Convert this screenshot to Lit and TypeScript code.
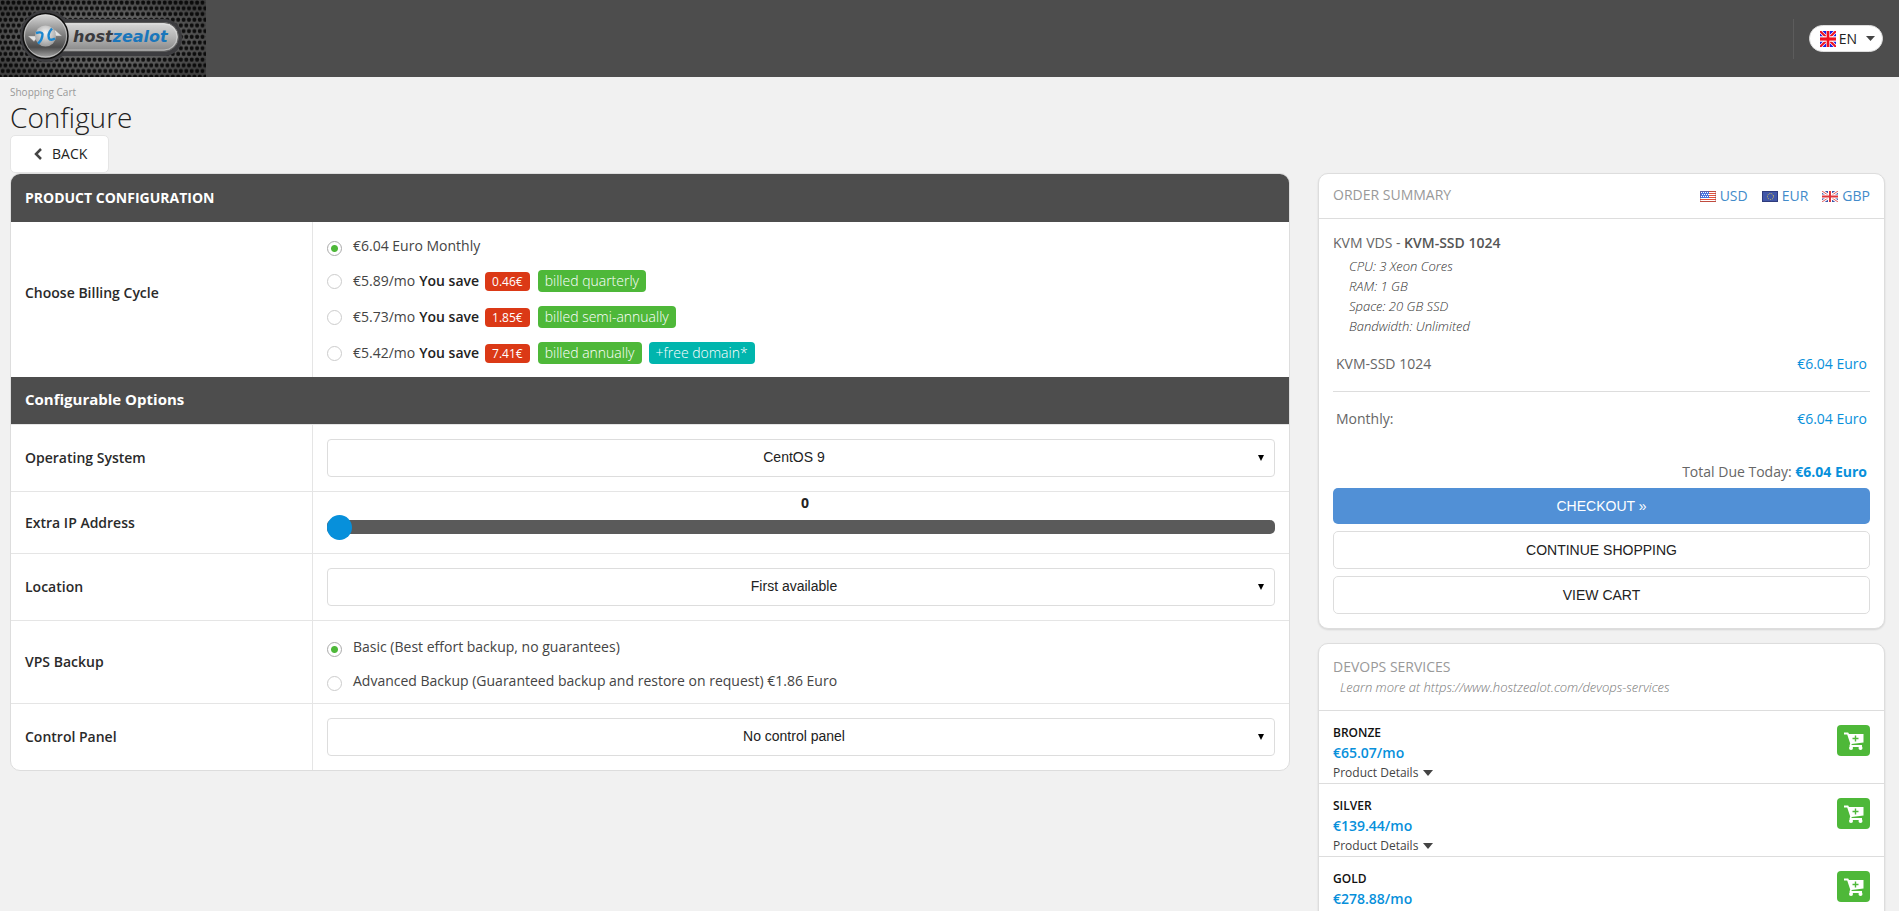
import { LitElement, html, css, svg } from "lit";
import { customElement, state } from "lit/decorators.js";

const unionJack = svg`
  <rect width="60" height="40" fill="#1c1ce0"/>
  <path d="M0 0L60 40M60 0L0 40" stroke="#fff" stroke-width="10"/>
  <path d="M0 0L60 40M60 0L0 40" stroke="#f01020" stroke-width="6"/>
  <path d="M30 0V40M0 20H60" stroke="#fff" stroke-width="14"/>
  <path d="M30 0V40" stroke="#f01020" stroke-width="10"/>
  <path d="M0 20H60" stroke="#f01020" stroke-width="8"/>`;

const flagUS = html`<svg class="flag" viewBox="0 0 16 11" aria-hidden="true">
  <rect width="16" height="11" fill="#fff"/>
  <path d="M0 .5H16M0 2.5H16M0 4.5H16M0 6.5H16M0 8.5H16M0 10.5H16" stroke="#e0543f"/>
  <rect width="9" height="7" fill="#4a74e0"/>
  <path d="M1 1.5H9M2 3.5H9M1 5.5H9" stroke="#fff" stroke-dasharray="1 1"/>
  <rect x=".5" y=".5" width="15" height="10" fill="none" stroke="#843c3c" stroke-opacity=".35"/></svg>`;

const flagEU = html`<svg class="flag" viewBox="0 0 16 11" aria-hidden="true">
  <rect width="16" height="11" fill="#4257a8"/>
  <circle cx="8.5" cy="5.5" r="3" fill="none" stroke="#e8d44a" stroke-dasharray="1 1.1"/>
  <rect x=".5" y=".5" width="15" height="10" fill="none" stroke="#2a3570" stroke-opacity=".8"/></svg>`;

const flagGB = html`<svg class="flag" viewBox="0 0 16 11" aria-hidden="true">
  <rect width="16" height="11" fill="#3f55a8"/>
  <path d="M0 0L16 11M16 0L0 11" stroke="#fff" stroke-width="3"/>
  <path d="M0 0L16 11M16 0L0 11" stroke="#e35a5a" stroke-width="1"/>
  <path d="M8 0V11M0 5.5H16" stroke="#fff" stroke-width="4"/>
  <path d="M8 0V11M0 5.5H16" stroke="#e0353c" stroke-width="2"/></svg>`;

const logo = html`<svg class="logo" viewBox="0 0 206 77" role="img" aria-label="hostzealot">
  <defs>
    <pattern id="mesh" width="5.4" height="11.4" patternUnits="userSpaceOnUse">
      <rect width="5.4" height="11.4" fill="#626262"/>
      <ellipse cx="2.7" cy="2.6" rx="2" ry="2.2" fill="#101010"/>
      <ellipse cx="0" cy="8.3" rx="2" ry="2.2" fill="#101010"/>
      <ellipse cx="5.4" cy="8.3" rx="2" ry="2.2" fill="#101010"/>
    </pattern>
    <radialGradient id="shade" cx=".5" cy=".5" r=".6">
      <stop offset=".5" stop-color="#000" stop-opacity="0"/>
      <stop offset="1" stop-color="#000" stop-opacity=".35"/>
    </radialGradient>
    <linearGradient id="bar" x1="0" y1="0" x2="0" y2="1">
      <stop offset="0" stop-color="#d8d8d8"/><stop offset=".5" stop-color="#b4b4b4"/><stop offset="1" stop-color="#868686"/>
    </linearGradient>
    <linearGradient id="knob" x1="0" y1="0" x2="0" y2="1">
      <stop offset="0" stop-color="#dcdcdc"/><stop offset=".4" stop-color="#8c8c8c"/><stop offset=".75" stop-color="#4c4c4c"/><stop offset="1" stop-color="#b0b0b0"/>
    </linearGradient>
    <radialGradient id="orb" cx=".5" cy=".35" r=".6">
      <stop offset="0" stop-color="#f4f4f4"/><stop offset="1" stop-color="#a2a2a2"/>
    </radialGradient>
  </defs>
  <rect width="206" height="77" fill="url(#mesh)"/>
  <rect width="206" height="77" fill="url(#shade)"/>
  <rect x="40" y="19" width="142" height="37" rx="18" fill="#3d3d40"/>
  <circle cx="46" cy="36" r="26" fill="#3d3d40"/>
  <rect x="44" y="22.5" width="134.5" height="29" rx="14.5" fill="url(#bar)" stroke="#5a5a5a"/>
  <rect x="46" y="24" width="131" height="26" rx="13" fill="none" stroke="#ececec" stroke-opacity=".5"/>
  <circle cx="45.5" cy="36" r="22.5" fill="url(#knob)" stroke="#101010" stroke-width="1.5"/>
  <circle cx="45.5" cy="36" r="21" fill="none" stroke="#e8e8e8" stroke-opacity=".55"/>
  <path d="M44 36L28 36L34 41.5L37 38L38 42ZM46 36L62 36L54 29L55 34L50 31Z" fill="#e4e4e4" stroke="#888" stroke-width=".5"/>
  <circle cx="45.5" cy="36" r="10.5" fill="url(#orb)"/>
  <path d="M36 33C39 32 42 32 42.5 34C42.500 37.500 41 41 38 43.500" fill="none" stroke="#1b86cf" stroke-width="2.4"/>
  <path d="M52 28.5C49 32 48 36 49 38.5C50 40.500 52.500 40 55 38.500" fill="none" stroke="#1b86cf" stroke-width="2.4"/>
  <text x="73" y="42" class="logo-text"><tspan fill="#3a3a3e">host</tspan><tspan fill="#1a76bb">zealot</tspan></text>
</svg>`;

const cartIcon = html`<svg width="21" height="21" viewBox="0 0 21 21" aria-hidden="true">
  <path fill="#fff" d="M1 2.5H5.2L6 4H20.5V12.5L8.5 14L8.7 15H19V17H7L6.5 15.5L7.2 13.5L4.2 4.5H1Z"/>
  <circle cx="8" cy="18" r="2" fill="#fff"/><circle cx="17.5" cy="18" r="2" fill="#fff"/>
  <path d="M12.5 5.5V11.5M9.5 8.5H15.5" stroke="#4eb839" stroke-width="1.4"/>
</svg>`;

interface Cycle { price: string; save?: string; term?: string; bonus?: string }

const cycles: Cycle[] = [
  { price: "€6.04 Euro Monthly" },
  { price: "€5.89/mo", save: "0.46€", term: "billed quarterly" },
  { price: "€5.73/mo", save: "1.85€", term: "billed semi-annually" },
  { price: "€5.42/mo", save: "7.41€", term: "billed annually", bonus: "+free domain*" },
];
const backups = [
  "Basic (Best effort backup, no guarantees)",
  "Advanced Backup (Guaranteed backup and restore on request) €1.86 Euro",
];
const specs = ["CPU: 3 Xeon Cores", "RAM: 1 GB", "Space: 20 GB SSD", "Bandwidth: Unlimited"];
const services = [
  { name: "BRONZE", price: "€65.07/mo" },
  { name: "SILVER", price: "€139.44/mo" },
  { name: "GOLD", price: "€278.88/mo" },
];

@customElement("app-root")
export class AppRoot extends LitElement {
  @state() private cycle = 0;
  @state() private backup = 0;
  @state() private extraIps = 0;

  static styles = css`
    :host {
      display: block;
      min-height: 100vh;
      background: #f1f1f1;
      color: #444;
      font: 400 14px/20px "Open Sans", sans-serif;
    }
    * { box-sizing: border-box; }
    h1, h2, h3, p, ul { margin: 0; padding: 0; list-style: none; font-size: inherit; font-weight: inherit; }
    a { color: inherit; text-decoration: none; }
    button, select, input { font: inherit; color: inherit; margin: 0; }
    button { cursor: pointer; }
    b { font-weight: 600; }

    .topbar {
      display: flex;
      align-items: center;
      justify-content: space-between;
      height: 77px;
      padding-right: 16px;
      background: #4d4d4d;
    }
    .logo { display: block; width: 206px; height: 77px; }
    .logo-text { font: italic bold 16px "DejaVu Sans", sans-serif; }
    .lang-area {
      display: flex;
      align-items: center;
      height: 40px;
      padding-left: 15px;
      border-left: 1px solid #5c5c5c;
    }
    .lang {
      display: flex;
      align-items: center;
      height: 27px;
      padding: 0 7px 0 10px;
      border: 1px solid #ddd;
      border-radius: 14px;
      background: #fff;
      color: #222;
    }
    .lang svg:first-child { margin-right: 3px; }
    .lang svg:last-child { margin-left: 9px; }

    .heading { padding: 5px 10px 0; }
    .crumb { font-size: 10px; color: #999; }
    .title { margin-bottom: 3px; color: #222; font-size: 28px; font-weight: 300; line-height: 30px; }
    .back {
      display: flex;
      align-items: center;
      gap: 9px;
      height: 38px;
      padding: 0 21px 0 22px;
      border: 1px solid #e5e5e5;
      border-radius: 5px;
      background: #fff;
      color: #222;
    }
    .columns {
      display: grid;
      grid-template-columns: 1280fr 567fr;
      gap: 28px;
      align-items: start;
      padding: 0 14px 14px 10px;
    }
    .side { display: grid; gap: 14px; }

    .panel, .card {
      border: 1px solid #ddd;
      border-radius: 10px;
      background: #fff;
      overflow: hidden;
    }
    .card { box-shadow: 0 1px 2px rgba(0, 0, 0, 0.12); }
    .bar {
      padding: 14px;
      background: #4d4d4d;
      color: #fff;
      font-weight: 700;
    }
    .bar-main { padding-top: 13px; line-height: 21px; }
    .bar-sub { padding: 13px 14px 15px; font-size: 15px; line-height: 19px; }
    .row {
      display: grid;
      grid-template-columns: 301px 1fr;
      border-top: 1px solid #e5e5e5;
    }
    .bar-main + .row { border-top: 0; }
    .name {
      display: flex;
      align-items: center;
      padding: 0 14px;
      color: #2a2a2a;
      font-weight: 600;
    }
    .bar-main + .row .name { padding-bottom: 14px; }
    .field { border-left: 1px solid #e5e5e5; padding: 14px; }
    .cycles { padding: 11px 14px 6px; }
    .backups { display: grid; gap: 4px; padding: 13px 14px 5px; }
    .choice { display: flex; align-items: center; height: 30px; }
    .choice.tagged { height: 36px; }
    .choice input {
      appearance: none;
      flex: none;
      width: 15px;
      height: 15px;
      margin-right: 11px;
      border: 1px solid #ccc;
      border-radius: 50%;
      background: #fff;
    }
    .choice input:checked {
      border-color: #aaa;
      background: radial-gradient(circle, #4eb839 3px, #fff 4px);
    }
    .choice .plain { padding-bottom: 4px; }
    .choice b { margin: 0 6px 0 4px; color: #222; }
    .tag {
      margin-right: 7px;
      padding: 0 7px;
      border-radius: 4px;
      background: #4eb839;
      color: #fff;
      line-height: 22px;
      font-weight: 300;
    }
    .tag.save { margin-right: 8px; background: #db3916; font-size: 12px; line-height: 19px; font-weight: 400; }
    .tag.bonus { background: #00b5ad; }

    .select { position: relative; }
    .select select {
      display: block;
      appearance: none;
      width: 100%;
      height: 38px;
      padding: 0 18px 2px 4px;
      border: 1px solid #ddd;
      border-radius: 4px;
      background: #fff;
      color: #222;
      font: 14px "Liberation Sans", sans-serif;
      text-align-last: center;
    }
    .select::after {
      content: "";
      position: absolute;
      top: 16px;
      right: 11px;
      border: solid transparent;
      border-width: 6px 3px 0;
      border-top-color: #000;
      pointer-events: none;
    }
    .slider { padding: 0 14px 13px; }
    .slider output { display: block; padding-left: 8px; line-height: 21px; font-weight: 700; text-align: center; color: #222; }
    .slider input {
      display: block;
      appearance: none;
      width: 100%;
      height: 14px;
      margin-top: 7px;
      margin-bottom: 6px;
      border-radius: 5px;
      background: #5a5a5a;
    }
    .slider input::-webkit-slider-thumb {
      appearance: none;
      width: 25px;
      height: 25px;
      border-radius: 50%;
      background: #0790db;
    }

    .card-head {
      display: flex;
      justify-content: space-between;
      padding: 11px 14px 12px;
      border-bottom: 1px solid #ddd;
      color: #999;
    }
    .currencies { display: flex; gap: 14px; padding-top: 1px; color: #428bca; }
    .currencies a { display: flex; align-items: center; gap: 4px; }
    .flag { width: 16px; height: 11px; }
    .summary { padding: 14px; color: #666; }
    .summary b { color: #555; }
    .specs { padding: 3px 16px 0; font-size: 13px; font-style: italic; font-weight: 300; color: #333; }
    .line { display: flex; justify-content: space-between; padding: 0 3px; }
    .amount { color: #0790db; }
    .product { margin-top: 18px; padding-bottom: 17px; border-bottom: 1px solid #ddd; }
    .monthly { margin-top: 17px; }
    .total { margin: 33px 3px 6px; text-align: right; }
    .total strong { color: #0790db; font-weight: 700; }
    .actions { display: grid; gap: 7px; }
    .action {
      height: 38px;
      border: 1px solid #ddd;
      border-radius: 5px;
      background: #fff;
      color: #222;
      font: 14px "Liberation Sans", sans-serif;
    }
    .action.primary { height: 36px; border: 0; background: #5190d6; color: #fff; }

    .devops { display: block; padding: 13px 14px; }
    .devops p { padding-left: 7px; font-size: 13px; font-style: italic; font-weight: 300; color: #777; }
    .service {
      display: flex;
      justify-content: space-between;
      align-items: start;
      height: 73px;
      padding: 14px 14px 0;
      border-bottom: 1px solid #ddd;
      font-size: 12px;
    }
    .service h3 { line-height: 16px; font-weight: 600; color: #111; }
    .service .price { font-size: 14px; line-height: 24px; font-weight: 600; color: #0790db; }
    .service .details {
      display: flex;
      align-items: center;
      gap: 5px;
      padding: 0;
      border: 0;
      background: none;
      line-height: 16px;
    }
    .add {
      display: grid;
      place-items: center;
      width: 33px;
      height: 31px;
      padding: 0;
      border: 0;
      border-radius: 4px;
      background: #4eb839;
    }
  `;

  private select(id: string, options: string[]) {
    return html`<div class="field"><div class="select">
      <select id=${id}>${options.map((o) => html`<option>${o}</option>`)}</select>
    </div></div>`;
  }

  render() {
    return html`
      <header class="topbar">
        <a href="#">${logo}</a>
        <div class="lang-area">
          <button class="lang" type="button">
            <svg width="16" height="16" viewBox="0 0 60 40" preserveAspectRatio="none" aria-hidden="true">${unionJack}</svg>
            EN
            <svg width="9" height="5" viewBox="0 0 9 5" aria-hidden="true"><path d="M0 0H9L4.5 5Z" fill="#444"/></svg>
          </button>
        </div>
      </header>

      <div class="heading">
        <p class="crumb">Shopping Cart</p>
        <h1 class="title">Configure</h1>
        <button class="back" type="button">
          <svg width="10" height="12" viewBox="0 0 10 12" aria-hidden="true"><path d="M8 1L3 6L8 11" fill="none" stroke="#444" stroke-width="2.5"/></svg>
          BACK
        </button>
      </div>

      <main class="columns">
        <form class="panel">
          <h2 class="bar bar-main">PRODUCT CONFIGURATION</h2>
          <div class="row">
            <div class="name" id="cycle-label">Choose Billing Cycle</div>
            <div class="field cycles" role="radiogroup" aria-labelledby="cycle-label">
              ${cycles.map((c, i) => html`<label class="choice ${c.save ? "tagged" : ""}">
                <input type="radio" name="cycle" .checked=${this.cycle === i} @change=${() => (this.cycle = i)}>
                <span class=${c.save ? "" : "plain"}>${c.price}</span>
                ${c.save ? html`<b>You save</b><span class="tag save">${c.save}</span><span class="tag">${c.term}</span>` : ""}
                ${c.bonus ? html`<span class="tag bonus">${c.bonus}</span>` : ""}
              </label>`)}
            </div>
          </div>
          <h2 class="bar bar-sub">Configurable Options</h2>
          <div class="row">
            <label class="name" for="os">Operating System</label>
            ${this.select("os", ["CentOS 9"])}
          </div>
          <div class="row">
            <label class="name" for="ips">Extra IP Address</label>
            <div class="field slider">
              <output for="ips">${this.extraIps}</output>
              <input id="ips" type="range" min="0" max="32" .value=${String(this.extraIps)}
                @input=${(e: Event) => (this.extraIps = Number((e.target as HTMLInputElement).value))}>
            </div>
          </div>
          <div class="row">
            <label class="name" for="location">Location</label>
            ${this.select("location", ["First available"])}
          </div>
          <div class="row">
            <div class="name" id="backup-label">VPS Backup</div>
            <div class="field backups" role="radiogroup" aria-labelledby="backup-label">
              ${backups.map((b, i) => html`<label class="choice">
                <input type="radio" name="backup" .checked=${this.backup === i} @change=${() => (this.backup = i)}>
                <span class="plain">${b}</span>
              </label>`)}
            </div>
          </div>
          <div class="row">
            <label class="name" for="panel">Control Panel</label>
            ${this.select("panel", ["No control panel"])}
          </div>
        </form>

        <aside class="side">
          <section class="card">
            <div class="card-head">
              <h2>ORDER SUMMARY</h2>
              <nav class="currencies">
                <a href="#">${flagUS}USD</a>
                <a href="#">${flagEU}EUR</a>
                <a href="#">${flagGB}GBP</a>
              </nav>
            </div>
            <div class="summary">
              <p>KVM VDS - <b>KVM-SSD 1024</b></p>
              <ul class="specs">${specs.map((s) => html`<li>${s}</li>`)}</ul>
              <div class="line product"><span>KVM-SSD 1024</span><span class="amount">€6.04 Euro</span></div>
              <div class="line monthly"><span>Monthly:</span><span class="amount">€6.04 Euro</span></div>
              <p class="total">Total Due Today: <strong>€6.04 Euro</strong></p>
              <div class="actions">
                <button class="action primary" type="button">CHECKOUT »</button>
                <button class="action" type="button">CONTINUE SHOPPING</button>
                <button class="action" type="button">VIEW CART</button>
              </div>
            </div>
          </section>

          <section class="card">
            <div class="card-head devops">
              <h2>DEVOPS SERVICES</h2>
              <p>Learn more at https://www.hostzealot.com/devops-services</p>
            </div>
            ${services.map((s) => html`<article class="service">
              <div>
                <h3>${s.name}</h3>
                <p class="price">${s.price}</p>
                <button class="details" type="button">Product Details
                  <svg width="10" height="6" viewBox="0 0 10 6" aria-hidden="true"><path d="M0 0H10L5 6Z" fill="#444"/></svg>
                </button>
              </div>
              <button class="add" type="button" aria-label="Add ${s.name} to cart">${cartIcon}</button>
            </article>`)}
          </section>
        </aside>
      </main>
    `;
  }
}
